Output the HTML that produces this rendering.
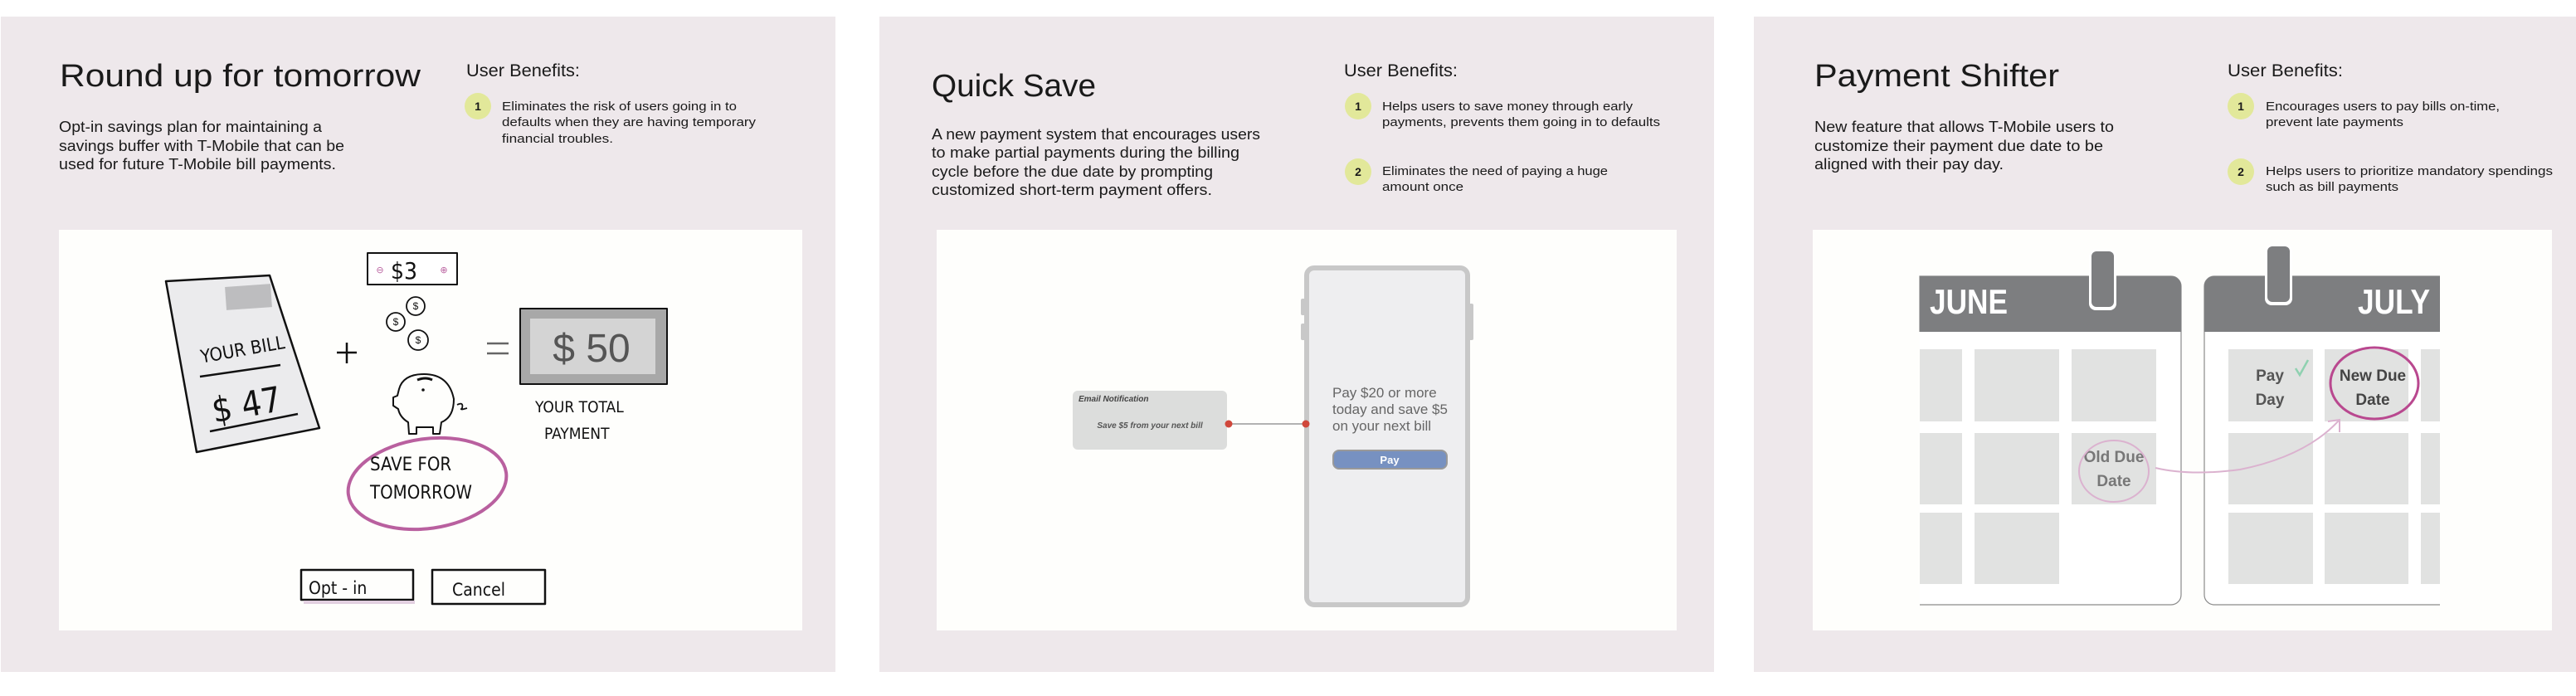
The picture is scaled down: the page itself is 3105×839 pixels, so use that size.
<!DOCTYPE html>
<html><head><meta charset="utf-8">
<style>
html,body{margin:0;padding:0;background:#fff;}
svg{display:block}
.t{font-family:"Liberation Sans",sans-serif;fill:#1a1a1a}
.h{font-family:"DejaVu Sans Condensed","Liberation Sans Narrow","Liberation Sans",sans-serif;fill:#111}
</style></head>
<body>
<svg width="3105" height="839" viewBox="0 0 3105 839" xmlns="http://www.w3.org/2000/svg">
<!-- panels -->
<rect x="1" y="20" width="1006" height="790" fill="#eee8eb"/>
<rect x="1060" y="20" width="1006" height="790" fill="#eee8eb"/>
<rect x="2114" y="20" width="991" height="790" fill="#eee8eb"/>
<!-- white boxes -->
<rect x="71" y="277" width="896" height="483" fill="#fefefc"/>
<rect x="1129" y="277" width="892" height="483" fill="#fefefc"/>
<rect x="2185" y="277" width="891" height="483" fill="#fefefc"/>

<!-- ===== Panel 1 text ===== -->
<text class="t" x="72" y="104" font-size="38" textLength="435" lengthAdjust="spacingAndGlyphs">Round up for tomorrow</text>
<g class="t" font-size="18">
<text x="71" y="159" textLength="317" lengthAdjust="spacingAndGlyphs">Opt-in savings plan for maintaining a</text>
<text x="71" y="182" textLength="344" lengthAdjust="spacingAndGlyphs">savings buffer with T-Mobile that can be</text>
<text x="71" y="204" textLength="334" lengthAdjust="spacingAndGlyphs">used for future T-Mobile bill payments.</text>
</g>
<text class="t" x="562" y="92" font-size="21" textLength="137" lengthAdjust="spacingAndGlyphs">User Benefits:</text>
<circle cx="576" cy="128" r="16" fill="#e2e89a"/>
<text class="t" x="576" y="133" font-size="14" font-weight="bold" text-anchor="middle">1</text>
<g class="t" font-size="15">
<text x="605" y="133" textLength="283" lengthAdjust="spacingAndGlyphs">Eliminates the risk of users going in to</text>
<text x="605" y="152" textLength="306" lengthAdjust="spacingAndGlyphs">defaults when they are having temporary</text>
<text x="605" y="172" textLength="134" lengthAdjust="spacingAndGlyphs">financial troubles.</text>
</g>

<!-- Panel 1 drawing -->
<g stroke="#111" stroke-width="2.5" fill="none" stroke-linejoin="round">
<polygon points="200,339 325,332 385,516 237,545" fill="#ebebed"/>
<line x1="241" y1="454" x2="338" y2="440"/>
<line x1="253" y1="520" x2="359" y2="499"/>
<path d="M406 425 h24 M418 413 v25"/>
<rect x="443" y="305" width="108" height="38" stroke-width="2" fill="#fff"/>
<path d="M587 414 h26 M587 426 h26" stroke="#666"/>
<rect x="627" y="372" width="177" height="91" fill="#a8a8a8" stroke-width="2"/>
<circle cx="501" cy="369" r="11" stroke-width="1.8"/>
<circle cx="477" cy="388" r="11" stroke-width="1.8"/>
<circle cx="504" cy="410" r="12" stroke-width="1.8"/>
<path d="M481 469 q5-18 30-18 q30 0 36 30 q0 22-15 28 l-2 14 h-8 l0-8 h-20 l0 8 h-9 l-1-14 q-10-6-12-16 l-6-4 v-10 l5-2 z" stroke-width="2"/>
<path d="M551 488 q8-4 6 4 q-4 3 6 0" stroke-width="1.8"/>
<path d="M503 458 q10-4 18 0" stroke-width="3"/>
<rect x="363" y="687" width="135" height="36" stroke-width="2.5"/>
<rect x="521" y="687" width="136" height="41" stroke-width="2.5"/>
</g>
<rect x="366" y="724" width="134" height="4" fill="#e2cfe0"/>
<circle cx="510" cy="470" r="1.8" fill="#111"/>
<rect x="272" y="344" width="55" height="28" fill="#bdbdbf" transform="rotate(-4 300 358)"/>
<path d="M639 384 h151 v67 h-151 z" fill="#d4d4d4"/>
<ellipse cx="515" cy="583" rx="96" ry="54" fill="none" stroke="#b9609f" stroke-width="4" transform="rotate(-8 515 583)"/>
<g class="h">
<text x="240" y="430" font-size="22" transform="rotate(-10 285 415)">YOUR BILL</text>
<text x="254" y="503" font-size="42" transform="rotate(-10 293 482)">$ 47</text>
<text x="471" y="336" font-size="28">$3</text>
<text x="645" y="497" font-size="19">YOUR TOTAL</text>
<text x="656" y="529" font-size="19">PAYMENT</text>
<text x="446" y="567" font-size="22">SAVE FOR</text>
<text x="446" y="601" font-size="22">TOMORROW</text>
<text x="372" y="716" font-size="21">Opt - in</text>
<text x="545" y="718" font-size="21">Cancel</text>
</g>
<text x="458" y="329" font-size="11" fill="#b9609f" font-family="DejaVu Sans" text-anchor="middle">⊖</text>
<text x="535" y="329" font-size="11" fill="#b9609f" font-family="DejaVu Sans" text-anchor="middle">⊕</text>
<g font-family="Liberation Sans" font-size="12" fill="#111" text-anchor="middle">
<text x="501" y="373">$</text><text x="477" y="392">$</text><text x="504" y="414">$</text>
</g>
<text x="713" y="436" font-family="Liberation Sans" font-size="48" fill="#555" text-anchor="middle">$ 50</text>

<!-- ===== Panel 2 ===== -->
<text class="t" x="1123" y="116" font-size="38" textLength="198" lengthAdjust="spacingAndGlyphs">Quick Save</text>
<g class="t" font-size="18">
<text x="1123" y="168" textLength="396" lengthAdjust="spacingAndGlyphs">A new payment system that encourages users</text>
<text x="1123" y="190" textLength="371" lengthAdjust="spacingAndGlyphs">to make partial payments during the billing</text>
<text x="1123" y="213" textLength="339" lengthAdjust="spacingAndGlyphs">cycle before the due date by prompting</text>
<text x="1123" y="235" textLength="338" lengthAdjust="spacingAndGlyphs">customized short-term payment offers.</text>
</g>
<text class="t" x="1620" y="92" font-size="21" textLength="137" lengthAdjust="spacingAndGlyphs">User Benefits:</text>
<circle cx="1637" cy="128" r="16" fill="#e2e89a"/>
<text class="t" x="1637" y="133" font-size="14" font-weight="bold" text-anchor="middle">1</text>
<circle cx="1637" cy="207" r="16" fill="#e2e89a"/>
<text class="t" x="1637" y="212" font-size="14" font-weight="bold" text-anchor="middle">2</text>
<g class="t" font-size="15">
<text x="1666" y="133" textLength="302" lengthAdjust="spacingAndGlyphs">Helps users to save money through early</text>
<text x="1666" y="152" textLength="335" lengthAdjust="spacingAndGlyphs">payments, prevents them going in to defaults</text>
<text x="1666" y="211" textLength="272" lengthAdjust="spacingAndGlyphs">Eliminates the need of paying a huge</text>
<text x="1666" y="230" textLength="98" lengthAdjust="spacingAndGlyphs">amount once</text>
</g>
<rect x="1293" y="471" width="186" height="71" rx="6" fill="#dcdddc"/>
<text x="1300" y="484" font-family="Liberation Sans" font-size="10" font-style="italic" font-weight="bold" fill="#444">Email Notification</text>
<text x="1386" y="516" font-family="Liberation Sans" font-size="10" font-style="italic" font-weight="bold" fill="#555" text-anchor="middle">Save $5 from your next bill</text>
<line x1="1480" y1="511" x2="1574" y2="511" stroke="#999" stroke-width="1.5"/>
<rect x="1568" y="360" width="6" height="20" rx="2" fill="#c8c8c8"/>
<rect x="1568" y="390" width="6" height="20" rx="2" fill="#c8c8c8"/>
<rect x="1770" y="366" width="6" height="44" rx="2" fill="#c8c8c8"/>
<rect x="1575" y="323" width="194" height="406" rx="9" fill="#eeeef0" stroke="#c8c8c8" stroke-width="6"/>
<circle cx="1481" cy="511" r="4.5" fill="#d0473b"/>
<circle cx="1574" cy="511" r="4.5" fill="#d0473b"/>
<g font-family="Liberation Sans" font-size="17" fill="#666">
<text x="1606" y="479">Pay $20 or more</text>
<text x="1606" y="499">today and save $5</text>
<text x="1606" y="519">on your next bill</text>
</g>
<rect x="1607" y="543" width="137" height="22" rx="7" fill="#7791c1" stroke="#999" stroke-width="2"/>
<text x="1675" y="559" font-family="Liberation Sans" font-size="13" font-weight="bold" fill="#fff" text-anchor="middle">Pay</text>

<!-- ===== Panel 3 ===== -->
<text class="t" x="2187" y="104" font-size="38" textLength="295" lengthAdjust="spacingAndGlyphs">Payment Shifter</text>
<g class="t" font-size="18">
<text x="2187" y="159" textLength="361" lengthAdjust="spacingAndGlyphs">New feature that allows T-Mobile users to</text>
<text x="2187" y="182" textLength="348" lengthAdjust="spacingAndGlyphs">customize their payment due date to be</text>
<text x="2187" y="204" textLength="228" lengthAdjust="spacingAndGlyphs">aligned with their pay day.</text>
</g>
<text class="t" x="2685" y="92" font-size="21" textLength="139" lengthAdjust="spacingAndGlyphs">User Benefits:</text>
<circle cx="2701" cy="128" r="16" fill="#e2e89a"/>
<text class="t" x="2701" y="133" font-size="14" font-weight="bold" text-anchor="middle">1</text>
<circle cx="2701" cy="207" r="16" fill="#e2e89a"/>
<text class="t" x="2701" y="212" font-size="14" font-weight="bold" text-anchor="middle">2</text>
<g class="t" font-size="15">
<text x="2731" y="133" textLength="282" lengthAdjust="spacingAndGlyphs">Encourages users to pay bills on-time,</text>
<text x="2731" y="152" textLength="166" lengthAdjust="spacingAndGlyphs">prevent late payments</text>
<text x="2731" y="211" textLength="346" lengthAdjust="spacingAndGlyphs">Helps users to prioritize mandatory spendings</text>
<text x="2731" y="230" textLength="160" lengthAdjust="spacingAndGlyphs">such as bill payments</text>
</g>
<!-- June -->
<path d="M2314 400 V333 H2617 a12 12 0 0 1 12 12 V717 a12 12 0 0 1 -12 12 H2314" fill="#fff" stroke="#8a8a8a" stroke-width="1.2"/>
<path d="M2314 333 H2617 a12 12 0 0 1 12 12 V400 H2314 z" fill="#7d7e80"/>
<rect x="2518" y="301" width="33" height="73" rx="8" fill="#fff"/>
<rect x="2521" y="303" width="27" height="67" rx="6" fill="#7d7e80"/>
<text x="2326" y="378" font-family="Liberation Sans Narrow,Liberation Sans,sans-serif" font-weight="bold" font-size="42" fill="#fff" textLength="94" lengthAdjust="spacingAndGlyphs">JUNE</text>
<g fill="#e1e2e1">
<rect x="2314" y="421" width="51" height="87"/><rect x="2380" y="421" width="102" height="87"/><rect x="2497" y="421" width="102" height="87"/>
<rect x="2314" y="522" width="51" height="86"/><rect x="2380" y="522" width="102" height="86"/><rect x="2497" y="522" width="102" height="86"/>
<rect x="2314" y="618" width="51" height="86"/><rect x="2380" y="618" width="102" height="86"/>
</g>
<!-- July -->
<path d="M2941 333 H2669 a12 12 0 0 0 -12 12 V717 a12 12 0 0 0 12 12 H2941" fill="#fff" stroke="#8a8a8a" stroke-width="1.2"/>
<path d="M2941 333 H2669 a12 12 0 0 0 -12 12 V400 H2941 z" fill="#7d7e80"/>
<rect x="2730" y="295" width="33" height="73" rx="8" fill="#fff"/>
<rect x="2733" y="297" width="27" height="67" rx="6" fill="#7d7e80"/>
<text x="2842" y="378" font-family="Liberation Sans Narrow,Liberation Sans,sans-serif" font-weight="bold" font-size="42" fill="#fff" textLength="87" lengthAdjust="spacingAndGlyphs">JULY</text>
<g fill="#e1e2e1">
<rect x="2686" y="421" width="102" height="87"/><rect x="2802" y="421" width="101" height="87"/><rect x="2918" y="421" width="23" height="87"/>
<rect x="2686" y="522" width="102" height="86"/><rect x="2802" y="522" width="101" height="86"/><rect x="2918" y="522" width="23" height="86"/>
<rect x="2686" y="618" width="102" height="86"/><rect x="2802" y="618" width="101" height="86"/><rect x="2918" y="618" width="23" height="86"/>
</g>
<g font-family="Liberation Sans Narrow,Liberation Sans,sans-serif" font-weight="bold" font-size="19" text-anchor="middle">
<text x="2736" y="459" fill="#555">Pay</text>
<text x="2736" y="488" fill="#555">Day</text>
<text x="2860" y="459" fill="#444">New Due</text>
<text x="2860" y="488" fill="#444">Date</text>
<text x="2548" y="557" fill="#777">Old Due</text>
<text x="2548" y="586" fill="#777">Date</text>
</g>
<path d="M2767 444 l5 8 l10-18" fill="none" stroke="#8fd1b0" stroke-width="2.5"/>
<ellipse cx="2862" cy="462" rx="53" ry="43" fill="none" stroke="#b9488f" stroke-width="3"/>
<ellipse cx="2548" cy="568" rx="42" ry="37" fill="none" stroke="#dbb2cf" stroke-width="2"/>
<path d="M2598 564 Q2640 574 2700 566 Q2780 550 2820 506 M2806 508 l14-2 l0 15" fill="none" stroke="#dbb2cf" stroke-width="2"/>
</svg>
</body></html>
